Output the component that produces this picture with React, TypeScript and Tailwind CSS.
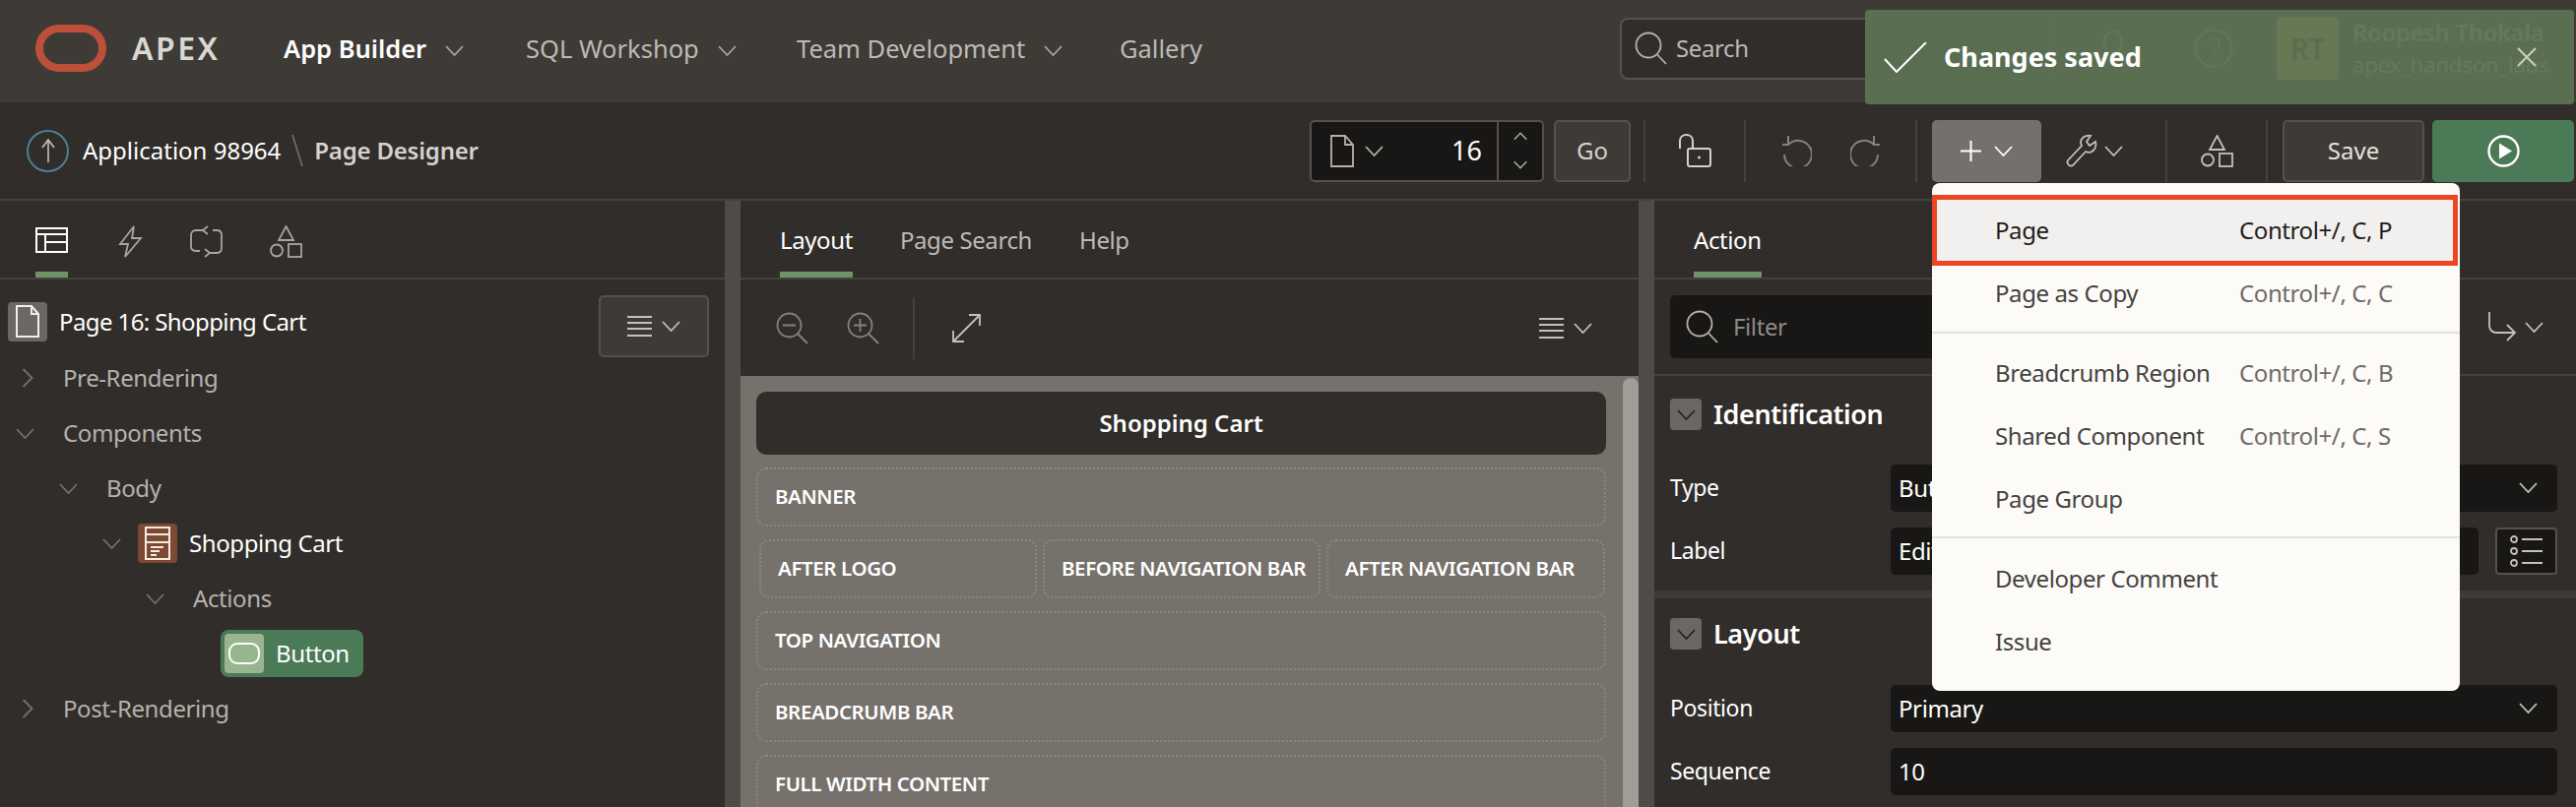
import type { ReactNode } from 'react';

const FONT = "font-['Noto_Sans','Open_Sans',sans-serif]";

function Chevron({ dir = 'down', className = 'text-[#a8a5a0]' }: { dir?: 'down' | 'up' | 'right'; className?: string }) {
  if (dir === 'right') {
    return (
      <svg width="12" height="20" viewBox="0 0 12 20" fill="none" className={className}>
        <path d="M1.5 1 L10.5 10 L1.5 19" stroke="currentColor" strokeWidth="1.8" />
      </svg>
    );
  }
  return (
    <svg width="19" height="11" viewBox="0 0 19 11" fill="none" className={className}>
      <path d={dir === 'down' ? 'M1 1 L9.5 10 L18 1' : 'M1 10 L9.5 1 L18 10'} stroke="currentColor" strokeWidth="1.8" />
    </svg>
  );
}

function MagnifierIcon({ className = 'text-[#b5b2ad]' }: { className?: string }) {
  return (
    <svg width="33" height="34" viewBox="0 0 33 34" fill="none" className={className}>
      <circle cx="14" cy="14" r="12.5" stroke="currentColor" strokeWidth="1.8" />
      <path d="M23 23.5 L32 33" stroke="currentColor" strokeWidth="1.8" />
    </svg>
  );
}

function DocIcon({ className = 'text-[#b5b2ad]' }: { className?: string }) {
  return (
    <svg width="24" height="33" viewBox="0 0 24 33" fill="none" className={className}>
      <path d="M1 1 H15 L23 10 V32 H1 Z M15 1 V10 H23" stroke="currentColor" strokeWidth="1.8" />
    </svg>
  );
}

function MenuLines() {
  return (
    <svg width="25" height="21" viewBox="0 0 25 21" fill="none" className="text-[#c4c1bc]">
      <path d="M0 1 H25 M0 7 H25 M0 13 H25 M0 20 H25" stroke="currentColor" strokeWidth="2" />
    </svg>
  );
}

function ShapesIcon({ className = 'text-[#b5b2ad]' }: { className?: string }) {
  return (
    <svg width="33" height="33" viewBox="0 0 33 33" fill="none" className={className}>
      <path d="M16.5 1 L24 15 H9 Z" stroke="currentColor" strokeWidth="1.8" />
      <circle cx="7" cy="25.5" r="6" stroke="currentColor" strokeWidth="1.8" />
      <rect x="19" y="19" width="13" height="13" stroke="currentColor" strokeWidth="1.8" />
    </svg>
  );
}

function Divider() {
  return <div className="w-[2px] h-[63px] bg-[#45423e]" />;
}

function NavItem({ label, width, active, chevron = true }: { label: string; width: string; active?: boolean; chevron?: boolean }) {
  return (
    <div className={`${width} shrink-0 flex items-center gap-[19px] tracking-normal`}>
      <span className={active ? 'text-[25.5px] font-semibold text-white' : 'text-[25.5px] text-[#bdbab5]'}>{label}</span>
      {chevron && <Chevron className="text-[#a8a5a0] mt-[4px]" />}
    </div>
  );
}

function Tab({ label, active, className = '' }: { label: string; active?: boolean; className?: string }) {
  return (
    <div
      className={`h-[78px] flex items-center pt-[8px] border-b-[6px] text-[24px] ${active ? 'border-[#6f9267] text-white' : 'border-transparent text-[#bdbab5]'} ${className}`}
    >
      {label}
    </div>
  );
}

function TreeRow({ indent, chevron, children }: { indent: string; chevron?: ReactNode; children: ReactNode }) {
  return (
    <div className={`h-[56px] flex items-center text-[24px] text-[#b5b2ad] ${indent}`}>
      {chevron}
      {children}
    </div>
  );
}

function Slot({ label, className = '' }: { label: string; className?: string }) {
  return (
    <div className={`h-[60px] shrink-0 flex items-center px-[17px] pb-[2px] rounded-[10px] border-2 border-dotted border-[#8b8782] text-[20.5px] font-semibold text-white whitespace-nowrap ${className}`}>
      {label}
    </div>
  );
}

function SectionHeader({ label }: { label: string }) {
  return (
    <div className="flex items-center gap-[12px]">
      <div className="w-[32px] h-[32px] rounded-[4px] bg-[#6b6864] flex items-center justify-center">
        <Chevron className="text-[#242220]" />
      </div>
      <span className="text-[27px] font-semibold text-white">{label}</span>
    </div>
  );
}

function Field({ label, value, chevron, short }: { label: string; value: string; chevron?: boolean; short?: boolean }) {
  return (
    <div className="h-[64px] flex items-center">
      <span className="w-[224px] text-[23px] text-white">{label}</span>
      <div className={`${short ? 'w-[597px]' : 'w-[677px]'} h-[48px] rounded-[5px] bg-[#181715] flex items-center justify-between pl-[8px] pr-[20px] text-[24px] text-white`}>
        {value}
        {chevron && <Chevron className="text-[#c4c1bc]" />}
      </div>
      {short && (
        <div className="ml-[17px] w-[63px] h-[48px] rounded-[4px] bg-[#181715] border-2 border-[#55524e] flex items-center justify-center">
          <svg width="34" height="34" viewBox="0 0 34 34" fill="none" className="text-[#c4c1bc]">
            <circle cx="4" cy="5" r="3" stroke="currentColor" strokeWidth="1.8" />
            <circle cx="4" cy="17" r="3" stroke="currentColor" strokeWidth="1.8" />
            <circle cx="4" cy="29" r="3" stroke="currentColor" strokeWidth="1.8" />
            <path d="M12 5 H33 M12 17 H33 M12 29 H33" stroke="currentColor" strokeWidth="2" />
          </svg>
        </div>
      )}
    </div>
  );
}

function MenuItem({ label, shortcut, className = 'text-[#45423f]', keyColor = 'text-[#6e6b67]' }: { label: string; shortcut?: string; className?: string; keyColor?: string }) {
  return (
    <div className={`h-[64px] flex items-center pl-[64px] text-[24px] ${className}`}>
      <span className="w-[248px] whitespace-nowrap">{label}</span>
      {shortcut && <span className={keyColor}>{shortcut}</span>}
    </div>
  );
}

export default function App() {
  return (
    <div className={`relative w-[2616px] h-[820px] overflow-hidden bg-[#312d2a] tracking-[-0.4px] ${FONT}`}>
      {/* top bar */}
      <header className="h-[104px] bg-[#3e3b37] flex items-center pl-[36px] pb-[6px]">
        <svg width="72" height="48" viewBox="0 0 72 48" fill="none" className="shrink-0 text-[#bc5039]">
          <rect x="4" y="4" width="64" height="40" rx="20" stroke="currentColor" strokeWidth="8" />
        </svg>
        <span className="ml-[26px] w-[154px] shrink-0 text-[32px] font-semibold text-[#d9d8d4] tracking-[2.5px]">APEX</span>
        <NavItem label="App Builder" width="w-[246px]" active />
        <NavItem label="SQL Workshop" width="w-[275px]" />
        <NavItem label="Team Development" width="w-[328px]" />
        <NavItem label="Gallery" width="w-[508px]" chevron={false} />
        <div className="w-[437px] h-[63px] shrink-0 rounded-[8px] bg-[#312d2a] border-2 border-[#55524e] flex items-center gap-[9px] pl-[13px] text-[24px] text-[#bdbab5]">
          <MagnifierIcon />
          Search
        </div>
        <svg width="30" height="36" viewBox="0 0 30 36" fill="none" className="ml-[50px] shrink-0 text-[#c4c1bc]">
          <ellipse cx="14" cy="12" rx="9" ry="11" stroke="currentColor" strokeWidth="2.5" />
          <path d="M2 35 C2 27 8 24 14 24 C20 24 27 27 28 35" stroke="currentColor" strokeWidth="2.5" />
        </svg>
        <svg width="40" height="40" viewBox="0 0 40 40" fill="none" className="ml-[66px] shrink-0 text-[#c4c1bc]">
          <circle cx="20" cy="20" r="18.5" stroke="currentColor" strokeWidth="2.5" />
          <path d="M14 15 C14 8 26 8 26 15 C26 20 20 20 20 25 M20 29 V31" stroke="currentColor" strokeWidth="2" />
        </svg>
        <div className="ml-[44px] w-[63px] h-[64px] shrink-0 rounded-[4px] bg-[#ffff67] flex items-center justify-center text-[30px] font-semibold text-[#3e3b37]">RT</div>
        <div className="ml-[14px] shrink-0 leading-[33px] text-white">
          <div className="text-[24px] font-semibold whitespace-nowrap">Roopesh Thokala</div>
          <div className="text-[22.5px] whitespace-nowrap">apex_handson_labs</div>
        </div>
      </header>

      {/* page designer toolbar */}
      <div className="h-[100px] border-b-2 border-[#45423e] flex items-center justify-between pl-[27px] pr-[2px]">
        <div className="flex items-center tracking-normal">
          <div className="w-[43px] h-[43px] rounded-full border-2 border-[#4d7f95] flex items-center justify-center">
            <svg width="14" height="24" viewBox="0 0 14 24" fill="none" className="text-[#c4c1bc]">
              <path d="M1 9 L7 1 L13 9 M7 1 V24" stroke="currentColor" strokeWidth="1.6" />
            </svg>
          </div>
          <span className="ml-[14px] text-[24px] text-white">Application 98964</span>
          <svg width="12" height="32" viewBox="0 0 12 32" fill="none" className="mx-[11px] text-[#75716c]">
            <path d="M1 0 L11 32" stroke="currentColor" strokeWidth="1.6" />
          </svg>
          <span className="text-[24px] tracking-[-0.2px] font-semibold text-[#d4d2ce]">Page Designer</span>
        </div>
        <div className="flex items-center tracking-normal">
          <div className="w-[238px] h-[63px] rounded-[5px] bg-[#181715] border-2 border-[#55524e] flex items-center pl-[19px]">
            <DocIcon />
            <Chevron className="ml-[11px] text-[#b5b2ad]" />
            <span className="w-[100px] text-right text-[27px] text-white">16</span>
            <div className="ml-[15px] h-full w-[46px] border-l-2 border-[#55524e] flex flex-col items-center justify-center gap-[18px]">
              <Chevron dir="up" className="w-[14px] text-[#b5b2ad]" />
              <Chevron className="w-[14px] text-[#b5b2ad]" />
            </div>
          </div>
          <div className="ml-[10px] w-[78px] h-[63px] rounded-[5px] bg-[#3e3b37] border-2 border-[#55524e] flex items-center justify-center text-[24px] text-[#d4d2ce]">Go</div>
          <div className="ml-[13px]"><Divider /></div>
          <svg width="33" height="34" viewBox="0 0 33 34" fill="none" className="ml-[34px] text-[#d4d2ce]">
            <rect x="9" y="15" width="23" height="18" rx="2" stroke="currentColor" strokeWidth="2" />
            <path d="M1 15 V7 C1 -1 14 -1 14 7 V15" stroke="currentColor" strokeWidth="2" />
            <circle cx="20.5" cy="24" r="1.5" fill="currentColor" />
          </svg>
          <div className="ml-[33px]"><Divider /></div>
          <svg width="31" height="32" viewBox="0 0 31 32" fill="none" className="ml-[36px] text-[#85817c]">
            <path d="M7 1 V10 H1 M7 10 A14 14 0 1 1 3 20" stroke="currentColor" strokeWidth="2" />
          </svg>
          <svg width="31" height="32" viewBox="0 0 31 32" fill="none" className="ml-[39px] text-[#85817c]">
            <path d="M24 1 V10 H30 M24 10 A14 14 0 1 0 28 20" stroke="currentColor" strokeWidth="2" />
          </svg>
          <div className="ml-[35px]"><Divider /></div>
          <div className="ml-[15px] w-[111px] h-[63px] rounded-[5px] bg-[#75706b] flex items-center pl-[29px] gap-[13px]">
            <svg width="21" height="21" viewBox="0 0 21 21" fill="none" className="text-white">
              <path d="M10.5 0 V21 M0 10.5 H21" stroke="currentColor" strokeWidth="2" />
            </svg>
            <Chevron className="text-white" />
          </div>
          <svg width="33" height="33" viewBox="0 0 33 33" fill="none" className="ml-[25px] text-[#c4c1bc]">
            <path d="M2 26 L16 11 C13 5 18 0 25 1 L21 7 L24 11 L30 7 C32 14 26 20 20 17 L7 31 C4 33 0 29 2 26 Z" stroke="currentColor" strokeWidth="1.8" />
          </svg>
          <Chevron className="ml-[6px] text-[#c4c1bc]" />
          <div className="ml-[43px]"><Divider /></div>
          <ShapesIcon className="ml-[34px] text-[#c4c1bc]" />
          <div className="ml-[33px]"><Divider /></div>
          <div className="ml-[15px] w-[144px] h-[63px] rounded-[5px] bg-[#3e3b37] border-2 border-[#55524e] flex items-center justify-center text-[24px] text-[#e4e2de]">Save</div>
          <div className="ml-[8px] w-[144px] h-[63px] rounded-[5px] bg-[#4a7a56] flex items-center justify-center">
            <svg width="33" height="33" viewBox="0 0 33 33" fill="none" className="text-white">
              <circle cx="16.5" cy="16.5" r="15" stroke="currentColor" strokeWidth="2.4" />
              <path d="M12 8.5 L25 16.5 L12 24.5 Z" fill="currentColor" />
            </svg>
          </div>
        </div>
      </div>

      <div className="flex h-[616px]">
        {/* tree panel */}
        <section className="w-[736px]">
          <div className="h-[80px] border-b-2 border-[#45423e] flex pl-[36px] gap-[48px]">
            <div className="w-[33px] h-[78px] border-b-[6px] border-[#6f9267] flex items-center pt-[8px]">
              <svg width="33" height="26" viewBox="0 0 33 26" fill="none" className="text-white">
                <rect x="1" y="1" width="31" height="24" stroke="currentColor" strokeWidth="2" />
                <path d="M1 7 H32 M10 7 V25 M10 15 H32" stroke="currentColor" strokeWidth="2" />
              </svg>
            </div>
            <div className="h-[78px] flex items-center pt-[4px] ml-[3px]">
              <svg width="25" height="33" viewBox="0 0 25 33" fill="none" className="text-[#a8a5a0]">
                <path d="M16 1 L2 19 H10 L7 32 L23 13 H14 Z" stroke="currentColor" strokeWidth="1.8" />
              </svg>
            </div>
            <div className="h-[78px] flex items-center pt-[4px]">
              <svg width="33" height="33" viewBox="0 0 33 33" fill="none" className="text-[#a8a5a0]">
                <path d="M18 1 L13 5 L18 9 M13 5 H6 C3 5 1 7 1 10 V21 C1 24 3 26 6 26 H10 M15 32 L20 28 L15 24 M20 28 H27 C30 28 32 26 32 23 V10 C32 7 30 5 27 5 H23" stroke="currentColor" strokeWidth="1.8" />
              </svg>
            </div>
            <div className="h-[78px] flex items-center pt-[4px]">
              <ShapesIcon className="text-[#a8a5a0]" />
            </div>
          </div>
          <div className="h-[72px] flex items-center justify-between pl-[8px] pr-[16px] pt-[14px]">
            <div className="flex items-center text-[24px] tracking-[-0.6px] text-white">
              <div className="w-[40px] h-[40px] rounded-[4px] bg-[#6b6864] flex items-center justify-center">
                <svg width="26" height="34" viewBox="0 0 26 34" fill="none" className="text-[#f1efeb]">
                  <path d="M2 1 H17 L24 9 V32 H2 Z M17 1 V9 H24" stroke="currentColor" strokeWidth="2" />
                </svg>
              </div>
              <span className="ml-[12px]">Page 16: Shopping Cart</span>
            </div>
            <div className="w-[112px] h-[63px] rounded-[5px] bg-[#3e3b37] border-2 border-[#55524e] flex items-center justify-center gap-[10px] mt-[8px]">
              <MenuLines />
              <Chevron className="text-[#c4c1bc]" />
            </div>
          </div>
          <TreeRow indent="pl-[22px]" chevron={<Chevron dir="right" className="w-[12px] mr-[30px] text-[#75716c]" />}>Pre-Rendering</TreeRow>
          <TreeRow indent="pl-[16px]" chevron={<Chevron className="mr-[29px] text-[#75716c]" />}>Components</TreeRow>
          <TreeRow indent="pl-[60px]" chevron={<Chevron className="mr-[29px] text-[#75716c]" />}>Body</TreeRow>
          <TreeRow indent="pl-[104px]" chevron={<Chevron className="mr-[17px] text-[#75716c]" />}>
            <div className="w-[40px] h-[40px] rounded-[4px] bg-[#7c4a32] flex items-center justify-center">
              <svg width="26" height="34" viewBox="0 0 26 34" fill="none" className="text-[#f7ece2]">
                <rect x="1" y="1" width="24" height="32" stroke="currentColor" strokeWidth="2" />
                <path d="M1 8 H25 M1 16 H25 M6 21 H19 M6 25 H15 M6 29 H12" stroke="currentColor" strokeWidth="2" />
              </svg>
            </div>
            <span className="ml-[12px] text-white">Shopping Cart</span>
          </TreeRow>
          <TreeRow indent="pl-[148px]" chevron={<Chevron className="mr-[29px] text-[#75716c]" />}>Actions</TreeRow>
          <TreeRow indent="pl-[224px]">
            <div className="w-[145px] h-[48px] rounded-[8px] bg-[#4a7a56] flex items-center pl-[4px] text-white">
              <div className="w-[40px] h-[40px] rounded-[4px] bg-[#99b58f] flex items-center justify-center">
                <svg width="32" height="22" viewBox="0 0 32 22" fill="none" className="text-white">
                  <rect x="1" y="1" width="30" height="20" rx="8" stroke="currentColor" strokeWidth="2" />
                </svg>
              </div>
              <span className="ml-[12px]">Button</span>
            </div>
          </TreeRow>
          <TreeRow indent="pl-[22px]" chevron={<Chevron dir="right" className="w-[12px] mr-[30px] text-[#75716c]" />}>Post-Rendering</TreeRow>
        </section>

        <div className="w-[16px] bg-[#4f4c48]" />

        {/* layout panel */}
        <section className="w-[912px] flex flex-col">
          <div className="h-[80px] border-b-2 border-[#45423e] flex pl-[40px] gap-[48px]">
            <Tab label="Layout" active />
            <Tab label="Page Search" />
            <Tab label="Help" />
          </div>
          <div className="h-[98px] flex items-center pl-[36px] pr-[47px]">
            <svg width="33" height="33" viewBox="0 0 33 33" fill="none" className="text-[#85817c]">
              <circle cx="13.5" cy="13.5" r="12" stroke="currentColor" strokeWidth="1.8" />
              <path d="M22 22 L32 32 M7 13.5 H20" stroke="currentColor" strokeWidth="1.8" />
            </svg>
            <svg width="33" height="33" viewBox="0 0 33 33" fill="none" className="ml-[39px] text-[#85817c]">
              <circle cx="13.5" cy="13.5" r="12" stroke="currentColor" strokeWidth="1.8" />
              <path d="M22 22 L32 32 M7 13.5 H20 M13.5 7 V20" stroke="currentColor" strokeWidth="1.8" />
            </svg>
            <div className="ml-[34px]"><Divider /></div>
            <svg width="29" height="29" viewBox="0 0 29 29" fill="none" className="ml-[38px] text-[#c4c1bc]">
              <path d="M17 1 H28 V12 M28 1 L1 28 M1 17 V28 H12" stroke="currentColor" strokeWidth="1.8" />
            </svg>
            <div className="ml-auto flex items-center gap-[10px]">
              <MenuLines />
              <Chevron className="text-[#c4c1bc]" />
            </div>
          </div>
          <div className="flex-1 flex bg-[#76716b] overflow-hidden">
            <div className="w-[896px] pl-[16px] pr-[17px] pt-[16px] flex flex-col gap-[13px]">
              <div className="h-[64px] shrink-0 rounded-[10px] pb-[1px] bg-[#312d2a] flex items-center justify-center text-[24px] font-semibold tracking-normal text-white">Shopping Cart</div>
              <Slot label="BANNER" />
              <div className="flex shrink-0 gap-[6px] pl-[3px]">
                <Slot label="AFTER LOGO" className="w-[282px]" />
                <Slot label="BEFORE NAVIGATION BAR" className="w-[282px]" />
                <Slot label="AFTER NAVIGATION BAR" className="w-[283px]" />
              </div>
              <Slot label="TOP NAVIGATION" />
              <Slot label="BREADCRUMB BAR" />
              <Slot label="FULL WIDTH CONTENT" />
            </div>
            <div className="w-[16px] h-full mt-[2px] rounded-t-[8px] bg-[#a09c97]" />
          </div>
        </section>

        <div className="w-[16px] bg-[#4f4c48]" />

        {/* property editor */}
        <section className="flex-1">
          <div className="h-[80px] border-b-2 border-[#45423e] flex pl-[40px]">
            <Tab label="Action" active />
          </div>
          <div className="h-[98px] border-b-2 border-[#45423e] flex items-center justify-between pl-[16px] pr-[33px]">
            <div className="w-[700px] h-[64px] rounded-[5px] bg-[#181715] flex items-center gap-[15px] pl-[16px] text-[24px] text-[#8e8a85]">
              <MagnifierIcon />
              Filter
            </div>
            <div className="flex items-center gap-[8px]">
              <svg width="29" height="30" viewBox="0 0 29 30" fill="none" className="text-[#c4c1bc]">
                <path d="M1 0 V14 C1 18 4 21 8 21 H27 M19 13 L27 21 L19 29" stroke="currentColor" strokeWidth="1.8" />
              </svg>
              <Chevron className="text-[#c4c1bc]" />
            </div>
          </div>
          <div className="pl-[16px] pr-[19px] h-[218px] pt-[19px]">
            <SectionHeader label="Identification" />
            <div className="mt-[22px]">
              <Field label="Type" value="Button" chevron />
              <Field label="Label" value="Edit" short />
            </div>
          </div>
          <div className="h-[8px] bg-[#3e3b37]" />
          <div className="pl-[16px] pr-[19px] pt-[16px]">
            <SectionHeader label="Layout" />
            <div className="mt-[23px]">
              <Field label="Position" value="Primary" chevron />
              <Field label="Sequence" value="10" />
            </div>
          </div>
        </section>
      </div>

      {/* success message, translucent over the user menu */}
      <div className="absolute left-[1894px] top-[10px] w-[720px] h-[96px] rounded-[4px] bg-[#5c7253]/95 flex items-center justify-between tracking-normal">
        <div className="flex items-center">
          <svg width="44" height="31" viewBox="0 0 44 31" fill="none" className="ml-[19px] text-white">
            <path d="M1 17 L13 30 L43 0" stroke="currentColor" strokeWidth="2" />
          </svg>
          <span className="ml-[17px] text-[27px] font-bold text-white">Changes saved</span>
        </div>
        <svg width="20" height="20" viewBox="0 0 20 20" fill="none" className="mr-[38px] text-[#c8cfc4]">
          <path d="M1 1 L19 19 M19 1 L1 19" stroke="currentColor" strokeWidth="2" />
        </svg>
      </div>

      {/* create menu */}
      <div className="absolute left-[1962px] top-[186px] w-[536px] h-[516px] rounded-[8px] bg-[#fcfbf8] pt-[12px]">
        <div className="w-[534px] h-[72px] bg-[#f1f0ee] border-[5px] border-[#ee4423] flex items-center pl-[59px] text-[24px] text-[#1f1d1b]">
          <span className="w-[248px]">Page</span>
          <span>Control+/, C, P</span>
        </div>
        <MenuItem label="Page as Copy" shortcut="Control+/, C, C" className="-mt-[4px] text-[#45423f]" />
        <div className="mt-[7px] mb-[8px] h-[2px] bg-[#e4e2df]" />
        <MenuItem label="Breadcrumb Region" shortcut="Control+/, C, B" />
        <MenuItem label="Shared Component" shortcut="Control+/, C, S" />
        <MenuItem label="Page Group" />
        <div className="mt-[6px] mb-[9px] h-[2px] bg-[#e4e2df]" />
        <MenuItem label="Developer Comment" />
        <MenuItem label="Issue" />
      </div>
    </div>
  );
}
